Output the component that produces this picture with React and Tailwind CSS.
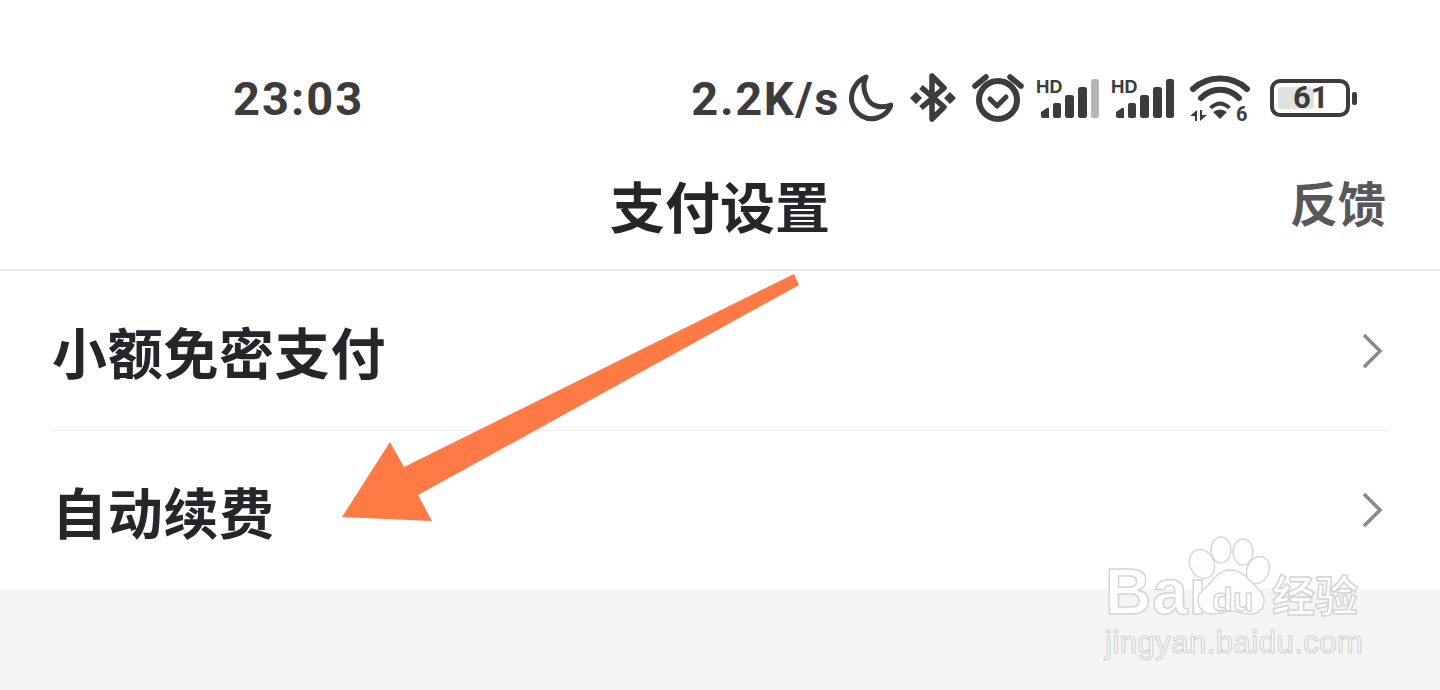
const cjk = "font-['Noto_Sans_CJK_SC','Noto_Sans',sans-serif]";

function Signal({ last }) {
  return (
    <svg width="60" height="42" viewBox="0 0 60 42" className="shrink-0 overflow-visible">
      <text x="-3" y="14" fontFamily="Inter, sans-serif" fontWeight="700" fontSize="18" fill="#3c3c3c">HD</text>
      <path d="M2 33 L8 29 Q10 28 10 30 V39 H4 Q2 39 2 37 Z" fill="#3c3c3c" />
      <rect x="14" y="24" width="8" height="15" rx="2" fill="#3c3c3c" />
      <rect x="26" y="16" width="9" height="23" rx="2.5" fill="#3c3c3c" />
      <rect x="39" y="8" width="9" height="31" rx="2.5" fill="#3c3c3c" />
      <rect x="52" y="0" width="8" height="39" rx="2.5" fill={last} />
    </svg>
  );
}

function Battery() {
  return (
    <div className="flex items-center ml-[20px]">
      <div className="w-[80px] h-[38px] rounded-[10px] border-4 border-[#3c3c3c] p-[4px] flex">
        <div className="w-[56%] h-full rounded-[3px] bg-[#e2e2e2] relative">
          <span className="absolute left-[15px] top-[-7px] text-[31px] leading-[36px] font-bold text-[#3c3c3c] font-['Roboto',sans-serif]">61</span>
        </div>
      </div>
      <div className="w-[5px] h-[13px] rounded-[2px] bg-[#3c3c3c] ml-[2px]" />
    </div>
  );
}

function StatusBar() {
  return (
    <div className="h-[146px] pt-[50px] pl-[233px] pr-[83px] flex items-center justify-between text-[#3c3c3c] font-['Roboto',sans-serif]">
      <span className="text-[47px] font-bold tracking-[2px] leading-none">23:03</span>
      <div className="flex items-center">
        <span className="text-[47px] font-bold tracking-[1.6px] leading-none mr-[9px]">2.2K/s</span>
        <svg width="44" height="48" viewBox="0 0 44 48" fill="none" stroke="#3c3c3c" strokeWidth="5" strokeLinejoin="round" strokeLinecap="round" className="shrink-0">
          <path d="M17 3 C5 8 1 20 3 29 C6 41 18 47 28 44 C35 42 40 37 42 31 C31 35 22 32 18 24 C14 16 14 9 17 3 Z" />
        </svg>
        <svg width="46" height="50" viewBox="0 0 46 50" fill="none" stroke="#3c3c3c" strokeWidth="5.5" strokeLinejoin="round" className="ml-[17px] shrink-0">
          <path d="M11 14 L34 34 L22 46 V3 L34 15 L11 35" />
          <path d="M6 19 L12 25 L6 31 L0 25 Z M40 19 L46 25 L40 31 L34 25 Z" fill="#3c3c3c" stroke="none" />
        </svg>
        <svg width="52" height="50" viewBox="0 0 52 50" fill="none" stroke="#3c3c3c" strokeLinecap="round" strokeLinejoin="round" className="ml-[16px] shrink-0">
          <circle cx="26" cy="27" r="19" strokeWidth="6" />
          <path d="M18 26 L25 33 L34 24" strokeWidth="5" />
          <path d="M3 13 L14 4 M49 13 L38 4" strokeWidth="5.5" />
        </svg>
        <div className="ml-[15px] mt-[4px] flex shrink-0 gap-[15px]">
          <Signal last="#b5b5b5" />
          <Signal last="#3c3c3c" />
        </div>
        <svg width="60" height="48" viewBox="0 0 60 48" className="ml-[16px] shrink-0 overflow-visible" fill="none">
          <path d="M3 15 C18 1 42 1 57 15" stroke="#3c3c3c" strokeWidth="6" strokeLinecap="round" />
          <path d="M11 24 C22 13 38 13 49 24" stroke="#3c3c3c" strokeWidth="6" strokeLinecap="round" />
          <path d="M19 33 Q30 22 41 33 L38 35 Q30 28 22 35 Z" fill="#3c3c3c" />
          <path d="M23 38 Q30 33 37 38 L30 45 Z" fill="#3c3c3c" />
          <path d="M7 36 V47 H5 V42 H0 Z M10 36 H12 V41 H17 L10 47 Z" fill="#3c3c3c" />
          <text x="46" y="47" fontFamily="Roboto, sans-serif" fontWeight="700" fontSize="20" fill="#3c3c3c">6</text>
        </svg>
        <Battery />
      </div>
    </div>
  );
}

function Row({ label, h, border }) {
  return (
    <div className={`${h} ${border} flex items-center justify-between`}>
      <span className="text-[55px] font-bold tracking-[0.7px] leading-none text-[#26262a]">{label}</span>
      <svg width="24" height="38" viewBox="0 0 24 38" fill="none" stroke="#8a8a8a" strokeWidth="3.6" className="mr-[4px] shrink-0">
        <path d="M4 3 L20 19 L4 35" />
      </svg>
    </div>
  );
}

function Watermark() {
  return (
    <div className="absolute left-[1104px] top-[536px] w-[262px] h-[124px] pointer-events-none">
      <span className="absolute left-[1px] top-[22px] text-[64px] leading-[68px] font-bold tracking-[1px] text-white/85 [-webkit-text-stroke:1.5px_#d4d4d4] font-['Liberation_Sans',sans-serif]">Bai</span>
      <svg width="90" height="86" viewBox="0 0 90 86" className="absolute left-[82px] top-0" fill="rgba(255,255,255,0.9)" stroke="#d8d8d8" strokeWidth="1.5">
        <ellipse cx="16" cy="28" rx="12" ry="15" transform="rotate(-25 16 28)" />
        <ellipse cx="35" cy="14" rx="10" ry="13" />
        <ellipse cx="57" cy="16" rx="10" ry="13" />
        <ellipse cx="72" cy="34" rx="11" ry="14" transform="rotate(25 72 34)" />
        <path d="M44 34 C32 34 26 46 17 54 C8 62 12 78 26 78 C34 78 38 75 45 75 C52 75 56 78 64 78 C78 78 82 64 74 55 C64 46 58 34 44 34 Z" />
      </svg>
      <span className="absolute left-[108px] top-[43px] text-[34px] leading-[40px] font-bold text-white/80 [-webkit-text-stroke:1px_#c8c8c8] font-['Liberation_Sans',sans-serif]">du</span>
      <span className={`absolute left-[168px] top-[28px] text-[43px] leading-[58px] font-bold text-white/85 [-webkit-text-stroke:1.5px_#d4d4d4] ${cjk}`}>经验</span>
      <span className="absolute left-[1px] top-[89px] text-[31px] leading-[36px] tracking-[0.5px] text-white/85 [-webkit-text-stroke:1.2px_#d4d4d4] font-['Liberation_Sans',sans-serif] whitespace-nowrap">jingyan.baidu.com</span>
    </div>
  );
}

function Arrow() {
  return (
    <svg width="1440" height="690" viewBox="0 0 1440 690" className="absolute left-0 top-0 pointer-events-none">
      <polygon points="342,517 390,442 404,467 794,274 799,285 418,495 432,521" fill="#ff7a45" />
    </svg>
  );
}

export default function App() {
  return (
    <div className={`relative w-[1440px] h-[690px] overflow-hidden bg-white flex flex-col ${cjk}`}>
      <StatusBar />
      <div className="h-[125px] shrink-0 border-b-2 border-[#e6e6e6] flex items-center justify-center relative">
        <span className="text-[55px] font-bold leading-none text-[#26262a] mt-[-6px]">支付设置</span>
        <span className="absolute right-[54px] top-[31px] text-[48px] leading-none text-[#58585c] font-bold">反馈</span>
      </div>
      <div className="mx-[52px] shrink-0">
        <Row label="小额免密支付" h="h-[160px]" border="border-b border-[#eeeeee]" />
        <Row label="自动续费" h="h-[158px]" border="" />
      </div>
      <div className="flex-1 bg-[#f5f5f5]" />
      <Arrow />
      <Watermark />
    </div>
  );
}
